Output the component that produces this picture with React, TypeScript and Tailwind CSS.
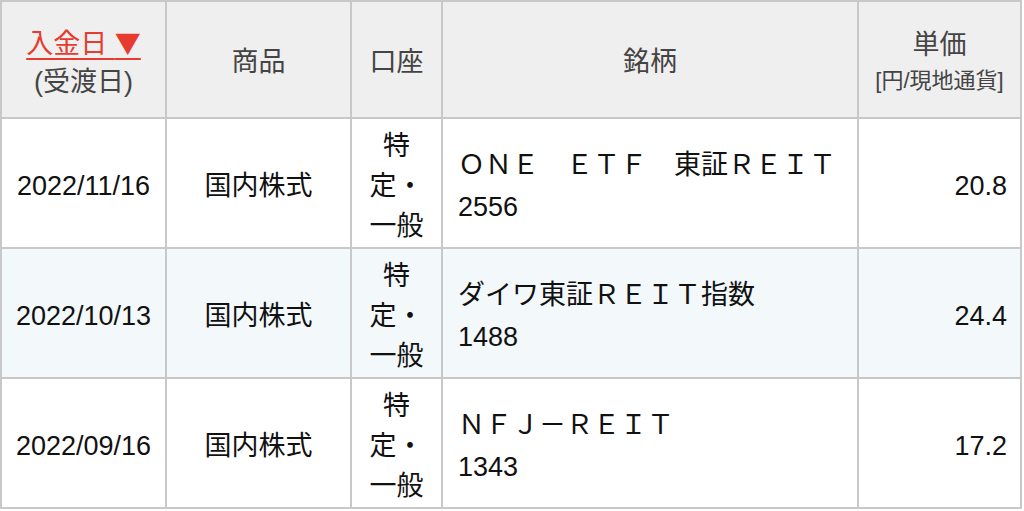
import React from "react";

const rows = [
  { date: "2022/11/16", product: "国内株式", name: "ＯＮＥ　ＥＴＦ　東証ＲＥＩＴ", code: "2556", price: "20.8", bg: "bg-white" },
  { date: "2022/10/13", product: "国内株式", name: "ダイワ東証ＲＥＩＴ指数", code: "1488", price: "24.4", bg: "bg-[#f3f8fb]" },
  { date: "2022/09/16", product: "国内株式", name: "ＮＦＪ－ＲＥＩＴ", code: "1343", price: "17.2", bg: "bg-white" },
];

const App = () => {
  return (
    <div className="w-[1024px] h-[511px] bg-white font-['Liberation_Sans','Noto_Sans_CJK_JP',sans-serif]">
      <div className="w-[1022px] grid grid-cols-[163px_183px_89px_414px_161px] grid-rows-[115px_128px_128px_128px] gap-[2px] p-[2px] bg-[#c8c8c8]">
        <div className="bg-[#efefef] flex flex-col items-center justify-center pt-[5px] text-[27px] leading-[38px] text-[#444]">
          <p className="text-[#e63b2e] underline decoration-[2px] underline-offset-[5px]">
            入金日 <span className="font-['Noto_Sans_CJK_JP'] text-[26px]">▼</span>
          </p>
          <p>(受渡日)</p>
        </div>
        <div className="bg-[#efefef] flex items-center justify-center pt-[5px] text-[27px] text-[#444]">商品</div>
        <div className="bg-[#efefef] flex items-center justify-center pt-[5px] text-[27px] text-[#444]">口座</div>
        <div className="bg-[#efefef] flex items-center justify-center pt-[5px] text-[27px] text-[#444]">銘柄</div>
        <div className="bg-[#efefef] flex flex-col items-center justify-center pt-[5px] text-[#444]">
          <p className="text-[27px] leading-[38px]">単価</p>
          <p className="text-[22px] leading-[34px]">[円/現地通貨]</p>
        </div>

        {rows.map((r) => (
          <React.Fragment key={r.date}>
            <div className={`${r.bg} flex items-center justify-center pt-[6px] text-[27px] text-[#111]`}>{r.date}</div>
            <div className={`${r.bg} flex items-center justify-center pt-[6px] text-[27px] text-[#111]`}>{r.product}</div>
            <div className={`${r.bg} flex flex-col items-center justify-center pt-[6px] text-[27px] leading-[40px] text-[#111]`}>
              <span>特</span>
              <span>定・</span>
              <span>一般</span>
            </div>
            <div className={`${r.bg} flex flex-col justify-center pl-[15px] pt-[6px] text-[27px] leading-[42px] text-[#111]`}>
              <p>{r.name}</p>
              <p>{r.code}</p>
            </div>
            <div className={`${r.bg} flex items-center justify-end pr-[13px] pt-[6px] text-[27px] text-[#111]`}>{r.price}</div>
          </React.Fragment>
        ))}
      </div>
    </div>
  );
};

export default App;
